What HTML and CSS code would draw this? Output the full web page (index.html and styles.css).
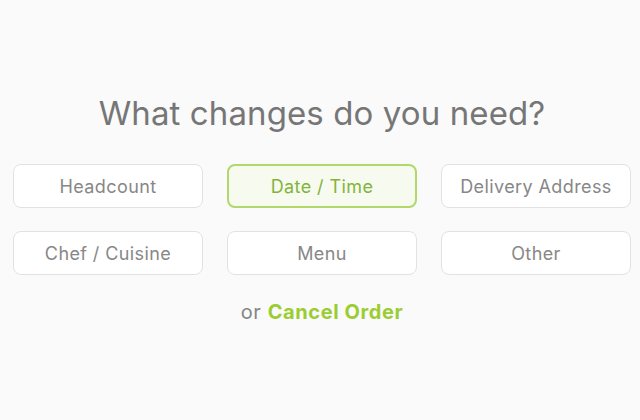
FILE: index.html
```html
<!DOCTYPE html>
<html lang="en-us">
<head>
    <meta charset="utf-8">
    <title>Change Order</title>
    <meta name="viewport" content="width=device-width, initial-scale=1.0">
    <link rel="stylesheet" href="styles.css">
</head>
<body>
    <div id="changes">
        <h1 class="title">What changes do you need?</h1>
        <div class="options">
            <button class="option">Headcount</button>
            <button class="option selected">Date / Time</button>
            <button class="option">Delivery Address</button>
            <button class="option">Chef / Cuisine</button>
            <button class="option">Menu</button>
            <button class="option">Other</button>
        </div>
        <p class="cancel">or <a href="#" class="cancel-link">Cancel Order</a></p>
    </div>
</body>
</html>
```

FILE: styles.css
```css
body {
    font-family: Inter, "Open Sans", sans-serif;
    margin: 0;
    padding: 0;
    background-color: #fafafa;
}
#changes {
    padding: 93px 9px 0 13px;
}
.title {
    margin: 0;
    font-size: 33px;
    line-height: 40px;
    font-weight: 400;
    letter-spacing: 0.1px;
    color: #767676;
    text-align: center;
}
.options {
    display: grid;
    grid-template-columns: repeat(3, 1fr);
    column-gap: 24px;
    row-gap: 23px;
    margin-top: 31px;
}
.option {
    height: 44px;
    background: #fff;
    border: 1.5px solid #e2e2e2;
    border-radius: 8px;
    font-family: inherit;
    font-size: 18px;
    letter-spacing: 0.4px;
    color: #878787;
    cursor: pointer;
}
.option.selected {
    background: #f7faef;
    border: 2px solid #b0d86a;
    color: #82b43c;
}
.cancel {
    margin: 25px 0 0;
    font-size: 20px;
    line-height: 24px;
    letter-spacing: 0.6px;
    color: #858585;
    text-align: center;
}
.cancel-link {
    color: #9acd32;
    font-weight: 700;
    text-decoration: none;
}
```
